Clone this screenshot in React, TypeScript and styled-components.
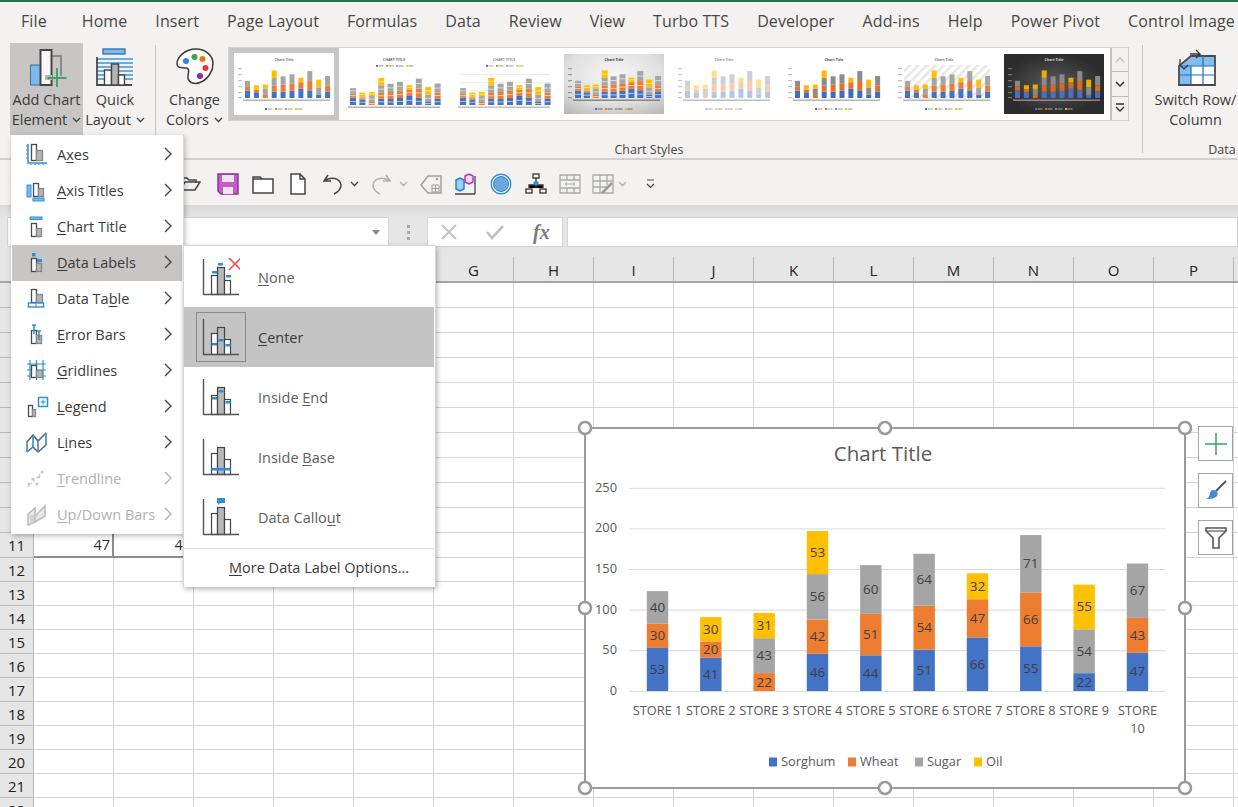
import React from "react";
import styled, { createGlobalStyle } from "styled-components";

const FONT = `"Open Sans", "Noto Sans", sans-serif`;
const BLUE = "#2b8fd8";
const DARK = "#4a4a4a";
const SERIES = ["#4472C4", "#ED7D31", "#A5A5A5", "#FFC000"];

const Global = createGlobalStyle`
  html, body { margin: 0; padding: 0; background: #fff; }
  * { box-sizing: border-box; }
`;

const Page = styled.div`
  position: relative;
  width: 1238px;
  height: 807px;
  overflow: hidden;
  background: #fff;
  font-family: ${FONT};
  color: #3b3a39;
`;
const TopStrip = styled.div`height: 2px; background: #217346;`;
const TabRow = styled.div`
  display: flex;
  align-items: center;
  height: 38px;
  padding-left: 7px;
  background: #f3f2f1;
  white-space: nowrap;
`;
const Tab = styled.span`
  padding: 0 14px;
  font-size: 16px;
  letter-spacing: 0.1px;
  color: #484644;
  &:first-child { margin-right: 7px; }
`;
const Ribbon = styled.div`
  display: flex;
  height: 120px;
  padding: 3px 0 0 10px;
  background: #f3f2f1;
  border-bottom: 2px solid #d2d0ce;
  overflow: hidden;
`;
const BigButton = styled.div<{ $w: number; $active?: boolean; $ml?: number }>`
  display: flex;
  flex-direction: column;
  align-items: center;
  flex: none;
  width: ${(p) => p.$w}px;
  height: 92px;
  margin-left: ${(p) => p.$ml ?? 0}px;
  padding-top: 4px;
  background: ${(p) => (p.$active ? "#c8c6c4" : "transparent")};
`;
const BigLabel = styled.div`
  margin-top: 3px;
  font-size: 14.5px;
  line-height: 20px;
  text-align: center;
  white-space: nowrap;
  color: #3b3a39;
`;
const Sep = styled.div<{ $h: number; $ml?: number }>`
  flex: none;
  width: 1px;
  height: ${(p) => p.$h}px;
  margin-top: 2px;
  margin-left: ${(p) => p.$ml ?? 0}px;
  background: #c8c6c4;
`;
const GroupColumn = styled.div<{ $w: number }>`
  display: flex;
  flex-direction: column;
  flex: none;
  width: ${(p) => p.$w}px;
`;
const GroupRow = styled.div`
  display: flex;
  height: 92px;
`;
const GroupLabel = styled.div`
  margin-top: 6px;
  font-size: 12.5px;
  line-height: 18px;
  text-align: center;
  color: #484644;
`;
const Gallery = styled.div`
  display: flex;
  flex: none;
  width: 883px;
  height: 74px;
  margin-top: 4px;
  background: #fff;
  border: 1px solid #d2d0ce;
`;
const Thumb = styled.div<{ $selected?: boolean }>`
  flex: none;
  width: 110px;
  height: 72px;
  border: ${(p) => (p.$selected ? "5px solid #c6c6c6" : "none")};
  padding: ${(p) => (p.$selected ? "1px 0" : "6px 5px")};
`;
const ThumbSvg = styled.svg`display: block;`;
const Scroller = styled.div`
  display: flex;
  flex-direction: column;
  flex: none;
  width: 18px;
  height: 74px;
  margin-top: 4px;
  border: 1px solid #d2d0ce;
  border-left: none;
`;
const ScrollButton = styled.div`
  display: flex;
  flex: 1;
  align-items: center;
  justify-content: center;
  background: #f3f2f1;
  border-bottom: 1px solid #bdbbb9;
  border-left: 1px solid #bdbbb9;
  &:last-child { border-bottom: none; }
`;
const Qat = styled.div`
  display: flex;
  align-items: center;
  height: 45px;
  padding: 2px 0 0 179px;
  background: #f3f2f1;
`;
const QatSlot = styled.div<{ $ml: number }>`
  display: flex;
  flex: none;
  align-items: center;
  justify-content: center;
  margin-left: ${(p) => p.$ml}px;
`;
const Shade = styled.div`
  height: 12px;
  background: linear-gradient(#d9d8d7, #e6e6e6);
`;
const FormulaBar = styled.div`
  display: flex;
  align-items: stretch;
  height: 30px;
  padding-left: 7px;
  background: #e6e6e6;
`;
const NameBox = styled.div`
  display: flex;
  flex: none;
  align-items: center;
  justify-content: flex-end;
  width: 382px;
  padding-right: 8px;
  background: #fff;
  border: 1px solid #d4d4d4;
`;
const Grip = styled.div`
  display: flex;
  flex: none;
  flex-direction: column;
  align-items: center;
  justify-content: center;
  gap: 3px;
  width: 38px;
`;
const GripDot = styled.span`
  width: 3px;
  height: 3px;
  background: #a8a8a8;
`;
const FxBox = styled.div`
  display: flex;
  flex: none;
  align-items: center;
  gap: 29px;
  width: 136px;
  padding-left: 13px;
  background: #fff;
  border: 1px solid #d4d4d4;
`;
const FxText = styled.span`
  font-family: "Liberation Serif", serif;
  font-size: 20px;
  font-style: italic;
  font-weight: 700;
  color: #7a7a7a;
`;
const FormulaInput = styled.div`
  flex: 1;
  margin-left: 4px;
  background: #fff;
  border: 1px solid #d4d4d4;
`;
const HeaderGap = styled.div`height: 10px; background: #e6e6e6;`;
const HeaderRow = styled.div`
  display: flex;
  height: 26px;
  background: #e6e6e6;
  border-bottom: 2px solid #a6a6a6;
`;
const Corner = styled.div`flex: none; width: 34px; border-right: 1px solid #b8b8b8;`;
const ColHead = styled.div`
  display: flex;
  flex: none;
  align-items: center;
  justify-content: center;
  width: 80px;
  padding-top: 2px;
  font-size: 15px;
  color: #222;
  border-right: 1px solid #b8b8b8;
`;
const Row = styled.div<{ $h: number }>`
  display: flex;
  height: ${(p) => p.$h}px;
`;
const RowHead = styled.div`
  display: flex;
  flex: none;
  align-items: center;
  justify-content: center;
  width: 34px;
  font-size: 15px;
  color: #222;
  background: #e6e6e6;
  border-right: 1px solid #b8b8b8;
  border-bottom: 1px solid #b8b8b8;
`;
const Cell = styled.div<{ $selBottom?: boolean; $selRight?: boolean }>`
  flex: none;
  width: 80px;
  padding-right: 2px;
  font-size: 14.5px;
  line-height: 23px;
  text-align: right;
  color: #333;
  border-right: ${(p) => (p.$selRight ? "2px solid #8c8c8c" : "1px solid #d4d4d4")};
  border-bottom: ${(p) => (p.$selBottom ? "2px solid #8c8c8c" : "1px solid #d4d4d4")};
`;

const Menu = styled.div`
  position: absolute;
  left: 11px;
  top: 135px;
  width: 173px;
  padding: 2px 1px 1px;
  background: #fff;
  border-right: 1px solid #d6d6d6;
  box-shadow: 1px 2px 5px rgba(0, 0, 0, 0.28);
`;
const MenuItem = styled.div<{ $active?: boolean; $disabled?: boolean }>`
  display: flex;
  align-items: center;
  height: 36px;
  padding: 0 0 2px 13px;
  font-size: 14.5px;
  background: ${(p) => (p.$active ? "#c8c6c4" : "transparent")};
  color: ${(p) => (p.$disabled ? "#b3b0ad" : "#3b3a39")};
  u { text-underline-offset: 2px; }
`;
const MenuIconSvg = styled.svg`flex: none;`;
const MenuLabel = styled.span`
  flex: 1;
  margin-left: 8px;
  white-space: nowrap;
`;
const Chevron = styled.span`
  display: flex;
  margin: 0 9px 1px 0;
`;
const SubMenu = styled.div`
  position: absolute;
  left: 183px;
  top: 245px;
  width: 253px;
  height: 342px;
  padding-top: 1px;
  background: #fff;
  box-shadow: 1px 2px 5px rgba(0, 0, 0, 0.3);
  border: 1px solid #d6d6d6;
  border-bottom: none;
`;
const SubItem = styled.div<{ $active?: boolean }>`
  display: flex;
  align-items: center;
  height: 60px;
  padding-left: 12px;
  margin-right: 1px;
  font-size: 14.5px;
  color: ${(p) => (p.$active ? "#3b3a39" : "#605e5c")};
  background: ${(p) => (p.$active ? "#c4c4c4" : "transparent")};
  u { text-underline-offset: 2px; }
`;
const SubIconFrame = styled.div<{ $active?: boolean }>`
  display: flex;
  flex: none;
  align-items: center;
  justify-content: center;
  width: 50px;
  height: 50px;
  border: 1px solid ${(p) => (p.$active ? "#8a8a8a" : "transparent")};
`;
const SubLabel = styled.span`margin-left: 12px;`;
const SubDivider = styled.div`
  height: 1px;
  margin: 1px 1px 0 0;
  background: #dcdcdc;
`;
const SubMore = styled.div`
  padding-left: 45px;
  font-size: 14.5px;
  line-height: 38px;
  color: #3b3a39;
  u { text-underline-offset: 2px; }
`;
const ChartBox = styled.div`
  position: absolute;
  left: 585px;
  top: 428px;
  width: 600px;
  height: 360px;
  svg { display: block; overflow: visible; }
`;
const SideButton = styled.div<{ $top: number }>`
  position: absolute;
  left: 1198px;
  top: ${(p) => p.$top}px;
  display: flex;
  align-items: center;
  justify-content: center;
  width: 35px;
  height: 35px;
  background: #fff;
  border: 1px solid #a6a6a6;
`;
const SmallSvg = styled.svg`
  margin-left: 5px;
  vertical-align: 2px;
`;

const DATA: number[][] = [
  [53, 30, 40, 0], [41, 20, 0, 30], [0, 22, 43, 31], [46, 42, 56, 53], [44, 51, 60, 0],
  [51, 54, 64, 0], [66, 47, 0, 32], [55, 66, 71, 0], [22, 0, 54, 55], [47, 43, 67, 0],
];

const Small = () => (
  <SmallSvg width="9" height="6" viewBox="0 0 9 6">
    <path d="M1 1l3.5 3.5L8 1" fill="none" stroke="#444" strokeWidth="1.3" />
  </SmallSvg>
);

const AddIcon = () => (
  <svg width="40" height="40" viewBox="0 0 40 40">
    <rect x="3.500" y="18" width="10" height="20" fill="#7db9ea" stroke="#3f6f9a" strokeWidth="1" />
    <rect x="13.500" y="3" width="11" height="35" fill="#f8f8f8" stroke="#444" strokeWidth="2" />
    <path d="M25 9h9v20" fill="none" stroke="#777" strokeWidth="1.5" />
    <rect x="18" y="28" width="7" height="5" fill="#b5b5b5" />
    <path d="M30 21v19M20.500 31h19" stroke="#36a55a" strokeWidth="1.8" />
  </svg>
);
const QuickIcon = () => (
  <svg width="40" height="40" viewBox="0 0 40 40">
    <rect x="8" y="2" width="22" height="5" fill="#7db9ea" stroke="#2d6ea8" strokeWidth="1.3" />
    <path d="M2 12h36M2 16h36M2 20h36M2 24h36M2 28h36M2 32h36" stroke="#3b97dc" strokeWidth="1.4" />
    <path d="M2 10v28h35" fill="none" stroke="#4a4a4a" strokeWidth="1.8" />
    <rect x="9.5" y="23" width="7" height="15" fill="#fff" stroke="#444" strokeWidth="1.4" />
    <rect x="16.5" y="17" width="7" height="21" fill="#b4b4b4" stroke="#444" strokeWidth="1.4" />
    <rect x="23.5" y="28" width="6" height="10" fill="#fff" stroke="#444" strokeWidth="1.4" />
  </svg>
);
const PaletteIcon = () => (
  <svg width="40" height="40" viewBox="0 0 40 40">
    <path d="M21 2C10 2 2 10 2 17c0 5 6 3 10 4 4 2 0 6 1 10 1 5 7 7 13 4 7-3 12-11 12-18C38 8 30 2 21 2Z" fill="#fff" stroke="#3b3a39" strokeWidth="1.5" />
    <circle cx="11" cy="14" r="3" fill="#2b88d8" />
    <circle cx="19.500" cy="10" r="3" fill="#3fa34d" />
    <circle cx="27.500" cy="12" r="3" fill="#e8750a" />
    <circle cx="30.500" cy="21" r="3" fill="#e53935" />
    <circle cx="25" cy="29" r="3" fill="#8e2aa8" />
  </svg>
);
const SwitchIcon = () => (
  <svg width="40" height="40" viewBox="0 0 40 40">
    <path d="M15 9h24v10H15zM3 21 15 9v10H27v0H3z" fill="#84bcef" />
    <path d="M3 19h12v19H3z" fill="#84bcef" />
    <path d="M15 19h24v19H15z" fill="#fff" />
    <path d="M3 19 15 9h24v29H3z" fill="none" stroke="#4a4a4a" strokeWidth="1.8" />
    <path d="M15 19v19M27 9v29M3 19h36M3 28h36" stroke="#1f6fb8" strokeWidth="1.2" />
    <path d="M14 7h10l-4-4M24 7l-4 4M4 12v6l4 4 4-4" fill="none" stroke="#3b3a39" strokeWidth="1.3" />
  </svg>
);

const bar = (x: number, y: number, w: number, b: number, gray?: boolean, c = DARK) => (
  <rect x={x} y={y} width={w} height={b - y} fill={gray ? "#b5b5b5" : "#fff"} stroke={c} strokeWidth="1.3" />
);
const MenuIcon = ({ name, dim }: { name: string; dim?: boolean }) => {
  const c = dim ? "#c4c4c4" : DARK;
  const body: Record<string, React.ReactNode> = {
    Axes: (
      <>
        {bar(6.500, 2.500, 5, 18.500, false, c)}{bar(11.500, 8.500, 6, 18.500, true, "#888")}
        <path d="M3 2v19h19" fill="none" stroke={BLUE} strokeWidth="1.500" />
        <path d="M1 4h2M1 8h2M1 12h2M1 16h2M6 22v1M10 22v1M14 22v1M18 22v1" stroke={BLUE} strokeWidth="1.200" />
      </>
    ),
    "Axis Titles": (
      <>
        <rect x="2" y="7" width="4" height="12" fill="#7db9ea" stroke={BLUE} />
        {bar(8.500, 5.500, 5, 18.500)}{bar(13.500, 10.500, 5, 18.500, true, "#888")}
        <rect x="8" y="20" width="11" height="3" fill="#7db9ea" stroke={BLUE} />
      </>
    ),
    "Chart Title": (
      <>
        <rect x="5" y="3" width="12" height="2.500" fill="#7db9ea" stroke={BLUE} />
        {bar(6.500, 9.500, 5, 22.500)}{bar(11.500, 14.500, 5, 22.500, true, "#888")}
      </>
    ),
    "Data Labels": (
      <>
        <rect x="7" y="3" width="3.500" height="3.500" fill={BLUE} />
        {bar(6.500, 8.500, 5, 21.500)}{bar(11.500, 13.500, 5, 21.500, true, "#888")}
        <rect x="12" y="9" width="5" height="3" fill={BLUE} />
      </>
    ),
    "Data Table": (
      <>
        {bar(6.500, 3.500, 5, 16.500)}{bar(11.500, 8.500, 6, 16.500, true, "#888")}
        <rect x="3.500" y="17" width="15" height="4" fill="#fff" stroke={BLUE} strokeWidth="1.400" />
        <path d="M11 17v4" stroke={BLUE} />
      </>
    ),
    "Error Bars": (
      <>
        {bar(6.500, 8.500, 5, 21.500)}{bar(11.500, 13.500, 5, 21.500, true, "#888")}
        <path d="M9 3v9M7 3h4M14 9v9M12 9h4" stroke={BLUE} strokeWidth="1.500" />
      </>
    ),
    Gridlines: (
      <>
        <path d="M2 6h19M2 12h19M2 18h19M5 2v20M11.500 2v20M18 2v20" stroke={BLUE} strokeWidth="1.200" />
        {bar(6.500, 7.500, 5, 19.500)}{bar(11.500, 12.500, 6, 19.500, true, "#888")}
      </>
    ),
    Legend: (
      <>
        {bar(3.500, 11.500, 4, 22.500)}{bar(7.500, 15.500, 3, 22.500, true, "#888")}
        <rect x="13.500" y="3.500" width="9" height="9" fill="#fff" stroke={BLUE} strokeWidth="1.500" />
        <path d="M15.500 8h5M18 5.500v5" stroke={BLUE} />
      </>
    ),
    Lines: (
      <>
        <path d="M2 12 8 5l5 6 8-8M2 22l6-5 5 5 8-7" fill="none" stroke="#666" strokeWidth="1.600" />
        <path d="M2 12v10M8 5v12M13 11v11M21 3v12" stroke={BLUE} strokeWidth="1.600" />
      </>
    ),
    Trendline: (
      <>
        <circle cx="4" cy="18" r="1.500" fill="#c4c4c4" /><circle cx="8" cy="13" r="1.500" fill="#c4c4c4" />
        <circle cx="12" cy="18" r="1.500" fill="#c4c4c4" /><circle cx="14" cy="11" r="1.500" fill="#c4c4c4" />
        <circle cx="17" cy="6" r="1.500" fill="#c4c4c4" />
        <path d="M3 21 20 3" stroke="#cfcfcf" strokeWidth="1.300" strokeDasharray="2 2" />
      </>
    ),
    "Up/Down Bars": (
      <>
        <path d="M3 12l7-6v14l-7 3zM10 14l10-10v10l-10 6" fill="#e8e8e8" stroke="#bdbdbd" strokeWidth="1.600" />
        <rect x="5" y="13" width="4" height="7" fill="#d2d2d2" />
      </>
    ),
  };
  return <MenuIconSvg width="24" height="24" viewBox="0 0 24 24">{body[name]}</MenuIconSvg>;
};
const DataIcon = ({ kind }: { kind: string }) => {
  const tops: Record<string, number[]> = {
    None: [17, 9, 22],
    Center: [15, 9, 21],
    "Inside End": [17, 9, 21],
    "Inside Base": [15, 9, 21],
    "Data Callout": [15, 9, 21],
  };
  const t = tops[kind];
  const b = [
    { x: 9, w: 6 },
    { x: 15, w: 7 },
    { x: 22, w: 6 },
  ];
  const dash = (x: number, y: number, w = 5) => <rect key={`${x}-${y}`} x={x} y={y} width={w} height="2.500" fill={BLUE} />;
  return (
    <svg width="38" height="38" viewBox="0 0 38 38">
      {b.map((r, i) => (
        <rect key={i} x={r.x + 0.5} y={t[i] + 0.5} width={r.w} height={36 - t[i]} fill={i === 1 ? "#b7b7b7" : "#fff"} stroke="#444" strokeWidth="1.200" />
      ))}
      <path d="M1.500 1v35.500H37" fill="none" stroke="#555" strokeWidth="1.400" />
      {kind === "None" && (
        <>
          {dash(10, 13)}{dash(16, 5)}{dash(24, 17)}
          <path d="M27 0l12 12M39 0 27 12" stroke="#ee4444" strokeWidth="1.500" />
        </>
      )}
      {kind === "Center" && <>{dash(10, 25)}{dash(16.500, 21)}{dash(23.500, 26)}</>}
      {kind === "Inside End" && <>{dash(10, 19)}{dash(16.500, 12)}{dash(23.500, 23)}</>}
      {kind === "Inside Base" && dash(9.500, 30, 19)}
      {kind === "Data Callout" && <path d="M15 0h8v5h-5l-2 2V5h-1z" fill={BLUE} />}
    </svg>
  );
};

const q = { stroke: "#444", fill: "none", strokeWidth: 1.500 };
const QatIcons: Record<string, React.ReactNode> = {
  open: (
    <svg width="22" height="20" viewBox="0 0 22 20">
      <path d="M1 4h7l2 2h7v3" {...q} /><path d="M1 4v12h15l5-8H6L1 16" {...q} />
    </svg>
  ),
  save: (
    <svg width="22" height="22" viewBox="0 0 22 22">
      <path d="M1 1h20v20H4l-3-3z" fill="#c65cc6" stroke="#8c2f96" strokeWidth="1.400" />
      <rect x="5" y="2" width="12" height="7" fill="#f3e4f3" />
      <rect x="6" y="14" width="10" height="7" fill="#f3e4f3" />
    </svg>
  ),
  folder: (
    <svg width="22" height="20" viewBox="0 0 22 20">
      <path d="M1 3h7l2 2h11v14H1z" fill="#fff" stroke="#444" strokeWidth="1.500" /><path d="M1 5h9" {...q} />
    </svg>
  ),
  page: (
    <svg width="18" height="22" viewBox="0 0 18 22">
      <path d="M2 1h9l5 5v15H2zM11 1v5h5" fill="#fff" stroke="#444" strokeWidth="1.500" />
    </svg>
  ),
  undo: (
    <svg width="22" height="22" viewBox="0 0 22 22">
      <path d="M6 2 2 8h7M2 8c7-5 16-3 17 4 0 4-3 7-7 9" {...q} />
    </svg>
  ),
  redo: (
    <svg width="22" height="22" viewBox="0 0 22 22">
      <path d="M16 2l4 6h-7M20 8C13 3 4 5 3 12c0 4 3 7 7 9" fill="none" stroke="#b0b0b0" strokeWidth="1.500" />
    </svg>
  ),
  tag: (
    <svg width="22" height="22" viewBox="0 0 22 22">
      <path d="M8 3h13v17H8L1 12z" fill="none" stroke="#a0a0a0" strokeWidth="1.500" />
      <path d="M12 12h7v7h-7zM15.500 12v7M12 15.500h7" fill="none" stroke="#a0a0a0" />
      <circle cx="17" cy="6" r="1.300" fill="#a0a0a0" />
    </svg>
  ),
  cubes: (
    <svg width="22" height="22" viewBox="0 0 22 22">
      <path d="M1 21h20M21 3v18" stroke="#444" strokeWidth="1.300" />
      <path d="M2 7l4-2 4 2v9l-4 2-4-2z" fill="#9fd0f5" stroke="#1f7fd0" strokeWidth="1.400" />
      <path d="M11 3l4-2 4 2v6l-4 2-4-2z" fill="#f3d9f3" stroke="#b032b0" strokeWidth="1.400" />
    </svg>
  ),
  circle: (
    <svg width="22" height="22" viewBox="0 0 22 22">
      <circle cx="11" cy="11" r="9.800" fill="#fff" stroke="#2b8fd8" strokeWidth="1.400" />
      <circle cx="11" cy="11" r="7.500" fill="#6ea6e0" stroke="#2b7fd0" />
    </svg>
  ),
  org: (
    <svg width="22" height="22" viewBox="0 0 22 22">
      <rect x="8" y="1" width="6" height="4" fill="none" stroke="#333" strokeWidth="1.300" />
      <path d="M11 5v3M4 15v-3h14v3M11 12v3" stroke="#333" strokeWidth="1.300" />
      <path d="M11 7l3 3-3 3-3-3z" fill="#2b8fd8" />
      <rect x="1" y="16" width="6" height="4" fill="none" stroke="#333" strokeWidth="1.300" />
      <rect x="15" y="16" width="6" height="4" fill="none" stroke="#333" strokeWidth="1.300" />
    </svg>
  ),
  table: (
    <svg width="22" height="22" viewBox="0 0 22 22">
      <path d="M1 2h20v18H1zM1 7h20M1 15h20M8 2v5M15 2v5M8 15v5M15 15v5" fill="none" stroke="#aaa" strokeWidth="1.300" />
      <path d="M6 11h10M6 11l2-2M6 11l2 2M16 11l-2-2M16 11l-2 2" stroke="#aaa" />
    </svg>
  ),
  table2: (
    <svg width="22" height="22" viewBox="0 0 22 22">
      <path d="M1 2h20v18H1zM1 8h20M1 14h14M8 2v18M15 2v10" fill="none" stroke="#aaa" strokeWidth="1.300" />
      <path d="M10 20l10-10" stroke="#999" strokeWidth="2.500" />
    </svg>
  ),
  chev: (
    <svg width="9" height="6" viewBox="0 0 9 6"><path d="M1 1l3.500 3.500L8 1" fill="none" stroke="#444" strokeWidth="1.300" /></svg>
  ),
  chevDim: (
    <svg width="9" height="6" viewBox="0 0 9 6"><path d="M1 1l3.500 3.500L8 1" fill="none" stroke="#b0b0b0" strokeWidth="1.300" /></svg>
  ),
  custom: (
    <svg width="11" height="10" viewBox="0 0 11 10"><path d="M2 1h7M2 5l3.500 3.500L9 5" fill="none" stroke="#444" strokeWidth="1.200" /></svg>
  ),
};
const QAT_ITEMS: [string, number][] = [
  ["open", 0], ["save", 16], ["folder", 13], ["page", 15], ["undo", 15], ["chev", 6], ["redo", 11], ["chevDim", 7],
  ["tag", 12], ["cubes", 12], ["circle", 14], ["org", 13], ["table", 12], ["table2", 11], ["chevDim", 4], ["custom", 18],
];

type Style = { bg: string; colors: string[]; title: string; titleColor: string; top?: boolean; grid?: boolean; hatch?: boolean; seg?: boolean; label: string };
const THUMBS: Style[] = [
  { bg: "#fff", colors: SERIES, title: "Chart Title", titleColor: "#777", label: "#999" },
  { bg: "#fff", colors: SERIES, title: "CHART TITLE", titleColor: "#666", top: true, seg: true, label: "#999" },
  { bg: "#fff", colors: SERIES, title: "CHART TITLE", titleColor: "#888", top: true, seg: true, grid: true, label: "#aaa" },
  { bg: "url(#grayBg)", colors: SERIES, title: "Chart Title", titleColor: "#333", seg: true, label: "#666" },
  { bg: "#fff", colors: ["#b4c7e7", "#f8cbad", "#d0d0d0", "#ffe08a"], title: "Chart Title", titleColor: "#999", label: "#aaa" },
  { bg: "#fff", colors: ["#3d6cc0", "#e8702a", "#8c8c8c", "#ffb900"], title: "Chart Title", titleColor: "#35507a", label: "#999" },
  { bg: "url(#hatchBg)", colors: SERIES, title: "Chart Title", titleColor: "#777", hatch: true, label: "#999" },
  { bg: "url(#darkBg)", colors: ["#4472C4", "#d9691f", "#8a8a8a", "#e8af00"], title: "Chart Title", titleColor: "#ddd", label: "#aaa" },
];
const MiniChart = ({ s, i }: { s: Style; i: number }) => {
  const base = s.top ? 51 : 44;
  const k = s.top ? 0.137 : 0.14;
  const x0 = s.top ? 6 : 11;
  const pitch = s.top ? 9.4 : 8.9;
  const w = s.top || s.seg ? 6 : 5;
  return (
    <ThumbSvg width="100" height="60" viewBox="0 0 100 60">
      <defs>
        <radialGradient id="grayBg" cx="0.5" cy="0.35" r="0.8"><stop offset="0" stopColor="#f6f6f6" /><stop offset="0.6" stopColor="#e0e0e0" /><stop offset="1" stopColor="#b8b8b8" /></radialGradient>
        <radialGradient id="darkBg"><stop offset="0" stopColor="#5a5a5a" /><stop offset="1" stopColor="#2c2c2c" /></radialGradient>
        <pattern id="hatchBg" width="6" height="6" patternUnits="userSpaceOnUse" patternTransform="rotate(45)">
          <rect width="6" height="6" fill="#fff" /><rect width="2.500" height="6" fill="#e6e6e6" />
        </pattern>
      </defs>
      <rect width="100" height="60" fill={s.hatch ? "#fff" : s.bg} />
      {s.hatch && <rect x="10" y="11" width="86" height="34" fill="url(#hatchBg)" />}
      <text x="50" y="6.500" fontSize="3.600" fontWeight="700" textAnchor="middle" fill={s.titleColor} fontFamily={FONT}>{s.title}</text>
      {s.top && [32, 42, 52, 62].map((x, n) => (
        <g key={x}>
          <rect x={x} y="11" width="2" height="1.800" fill={s.colors[n]} />
          <rect x={x + 2.500} y="11" width="5" height="1.800" fill={s.label} opacity="0.6" />
        </g>
      ))}
      {s.grid && [20, 28, 36, 44].map((y) => <rect key={y} x="6" y={y} width="90" height="0.500" fill="#ddd" />)}
      {!s.top && [14, 20, 26, 32, 38, 43].map((y) => <rect key={y} x="4" y={y} width="4" height="1.200" fill={s.label} opacity="0.6" />)}
      {DATA.map((d, c) => {
        let y = base;
        return d.map((v, j) => {
          if (!v) return null;
          const h = v * k;
          y -= h;
          return (
            <g key={`${i}-${c}-${j}`}>
              <rect x={x0 + c * pitch} y={y} width={w} height={h} fill={s.colors[j]} />
              {s.seg && <rect x={x0 + c * pitch} y={y + h / 2 - 0.4} width={w} height="0.800" fill="#fff" opacity="0.7" />}
            </g>
          );
        });
      })}
      <rect x={x0 - 2} y={base + 1.500} width={100 - x0 - 2} height="1.400" fill={s.label} opacity="0.8" />
      {!s.top && [31, 41, 51, 61].map((x, n) => (
        <g key={x}>
          <rect x={x} y="54" width="2" height="2" fill={s.colors[n]} />
          <rect x={x + 2.500} y="54.300" width="5" height="1.400" fill={s.label} opacity="0.7" />
        </g>
      ))}
    </ThumbSvg>
  );
};

const CATS = ["STORE 1", "STORE 2", "STORE 3", "STORE 4", "STORE 5", "STORE 6", "STORE 7", "STORE 8", "STORE 9"];
const AX = { fontFamily: FONT, fontSize: 12.8, fill: "#595959" };
const Chart = () => {
  const zero = 691;
  const k = 0.812;
  return (
    <svg width="600" height="360" viewBox="585 428 600 360">
      <rect x="585" y="428" width="600" height="360" fill="#fff" stroke="#9a9a9a" strokeWidth="2" />
      <text x="883" y="461" textAnchor="middle" fontFamily={FONT} fontSize="20.500" fill="#595959">Chart Title</text>
      {[0, 50, 100, 150, 200, 250].map((v) => {
        const y = zero - v * k + 0.3;
        return (
          <g key={v}>
            <line x1="629" x2="1165" y1={y} y2={y} stroke="#d9d9d9" strokeWidth="1" />
            <text x="617" y={y + 3.500} textAnchor="end" {...AX}>{v}</text>
          </g>
        );
      })}
      {DATA.map((d, c) => {
        let y = zero;
        const cx = 657.500 + c * 53.330;
        return (
          <g key={c}>
            {d.map((v, j) => {
              if (!v) return null;
              const h = v * k;
              y -= h;
              return (
                <g key={j}>
                  <rect x={cx - 10.700} y={y} width="21.400" height={h} fill={SERIES[j]} />
                  <text x={cx} y={y + h / 2 + 4.500} textAnchor="middle" fontFamily={FONT} fontSize="13.500" fill="#404040">{v}</text>
                </g>
              );
            })}
          </g>
        );
      })}
      {CATS.map((t, c) => <text key={t} x={657.500 + c * 53.330} y="715" textAnchor="middle" {...AX}>{t}</text>)}
      <text x="1137.500" y="715" textAnchor="middle" {...AX}>STORE</text>
      <text x="1137.500" y="733" textAnchor="middle" {...AX}>10</text>
      {[["Sorghum", 769], ["Wheat", 848], ["Sugar", 915], ["Oil", 974]].map(([t, x], i) => (
        <g key={t as string}>
          <rect x={x as number} y="757.500" width="8" height="9" fill={SERIES[i]} />
          <text x={(x as number) + 12} y="766" {...AX}>{t as string}</text>
        </g>
      ))}
      {[[585, 428], [885, 428], [1185, 428], [585, 608], [1185, 608], [585, 788], [885, 788], [1185, 788]].map(([x, y]) => (
        <circle key={`${x}-${y}`} cx={x} cy={y} r="6" fill="#fff" stroke="#999" strokeWidth="2.500" />
      ))}
    </svg>
  );
};

const Lbl = ({ t }: { t: [string, string, string] }) => (
  <>{t[0]}<u>{t[1]}</u>{t[2]}</>
);
const MENU: { id: string; t: [string, string, string]; active?: boolean; dim?: boolean }[] = [
  { id: "Axes", t: ["A", "x", "es"] },
  { id: "Axis Titles", t: ["", "A", "xis Titles"] },
  { id: "Chart Title", t: ["", "C", "hart Title"] },
  { id: "Data Labels", t: ["", "D", "ata Labels"], active: true },
  { id: "Data Table", t: ["Data Ta", "b", "le"] },
  { id: "Error Bars", t: ["", "E", "rror Bars"] },
  { id: "Gridlines", t: ["", "G", "ridlines"] },
  { id: "Legend", t: ["", "L", "egend"] },
  { id: "Lines", t: ["L", "i", "nes"] },
  { id: "Trendline", t: ["", "T", "rendline"], dim: true },
  { id: "Up/Down Bars", t: ["", "U", "p/Down Bars"], dim: true },
];
const SUB: { id: string; t: [string, string, string]; active?: boolean }[] = [
  { id: "None", t: ["", "N", "one"] },
  { id: "Center", t: ["", "C", "enter"], active: true },
  { id: "Inside End", t: ["Inside ", "E", "nd"] },
  { id: "Inside Base", t: ["Inside ", "B", "ase"] },
  { id: "Data Callout", t: ["Data Callo", "u", "t"] },
];
const TABS = ["File", "Home", "Insert", "Page Layout", "Formulas", "Data", "Review", "View", "Turbo TTS", "Developer", "Add-ins", "Help", "Power Pivot", "Control Image"];
// the columns under the open menus and the one past the edge show no letter in the picture
const COLS = ["", "", "", "", "", "G", "H", "I", "J", "K", "L", "M", "N", "O", "P", ""];
const ROWS = Array.from({ length: 22 }, (_, i) => i + 1);

export default function App() {
  return (
    <Page>
      <Global />
      <TopStrip />
      <TabRow>{TABS.map((t) => <Tab key={t}>{t}</Tab>)}</TabRow>
      <Ribbon>
        <BigButton $w={73} $active>
          <AddIcon />
          <BigLabel>Add Chart<br />Element<Small /></BigLabel>
        </BigButton>
        <BigButton $w={64}>
          <QuickIcon />
          <BigLabel>Quick<br />Layout<Small /></BigLabel>
        </BigButton>
        <Sep $h={90} $ml={8} />
        <GroupColumn $w={986}>
          <GroupRow>
            <BigButton $w={67} $ml={5}>
              <PaletteIcon />
              <BigLabel>Change<br />Colors<Small /></BigLabel>
            </BigButton>
            <Gallery>
              {THUMBS.map((s, i) => (
                <Thumb key={i} $selected={i === 0}><MiniChart s={s} i={i} /></Thumb>
              ))}
            </Gallery>
            <Scroller>
              <ScrollButton>
                <svg width="10" height="6" viewBox="0 0 10 6"><path d="M1 5l4-4 4 4" fill="none" stroke="#bbb" strokeWidth="1.300" /></svg>
              </ScrollButton>
              <ScrollButton>
                <svg width="10" height="6" viewBox="0 0 10 6"><path d="M1 1l4 4 4-4" fill="none" stroke="#333" strokeWidth="1.500" /></svg>
              </ScrollButton>
              <ScrollButton>
                <svg width="10" height="10" viewBox="0 0 10 10"><path d="M1 1h8M1 4l4 4 4-4" fill="none" stroke="#333" strokeWidth="1.300" /></svg>
              </ScrollButton>
            </Scroller>
          </GroupRow>
          <GroupLabel>Chart Styles</GroupLabel>
        </GroupColumn>
        <Sep $h={108} />
        <GroupColumn $w={158}>
          <GroupRow>
            <BigButton $w={105}>
              <SwitchIcon />
              <BigLabel>Switch Row/<br />Column</BigLabel>
            </BigButton>
          </GroupRow>
          <GroupLabel>Data</GroupLabel>
        </GroupColumn>
      </Ribbon>
      <Qat>
        {QAT_ITEMS.map(([k, ml], i) => <QatSlot key={i} $ml={ml}>{QatIcons[k]}</QatSlot>)}
      </Qat>
      <Shade />
      <FormulaBar>
        <NameBox>
          <svg width="8" height="5" viewBox="0 0 8 5"><path d="M0 0h8L4 5z" fill="#888" /></svg>
        </NameBox>
        <Grip><GripDot /><GripDot /><GripDot /></Grip>
        <FxBox>
          <svg width="16" height="16" viewBox="0 0 16 16"><path d="M1 1l14 14M15 1 1 15" stroke="#c0c0c0" strokeWidth="1.800" /></svg>
          <svg width="18" height="16" viewBox="0 0 18 16"><path d="M1 8l5 6L17 2" fill="none" stroke="#c0c0c0" strokeWidth="2.600" /></svg>
          <FxText>fx</FxText>
        </FxBox>
        <FormulaInput />
      </FormulaBar>
      <HeaderGap />
      <HeaderRow>
        <Corner />
        {COLS.map((c, i) => <ColHead key={i}>{c}</ColHead>)}
      </HeaderRow>
      {ROWS.map((r) => (
        <Row key={r} $h={r <= 11 ? 25 : 24}>
          <RowHead>{r >= 11 ? r : ""}</RowHead>
          {COLS.map((_, i) => (
            <Cell key={i} $selBottom={r === 11 && i < 2} $selRight={r === 11 && i === 0}>
              {r === 11 && i === 0 ? "47" : r === 11 && i === 1 ? "43" : ""}
            </Cell>
          ))}
        </Row>
      ))}
      <Menu>
        {MENU.map((m) => (
          <MenuItem key={m.id} $active={m.active} $disabled={m.dim}>
            <MenuIcon name={m.id} dim={m.dim} />
            <MenuLabel><Lbl t={m.t} /></MenuLabel>
            <Chevron>
              <svg width="9" height="14" viewBox="0 0 9 14"><path d="M1 1l6 6-6 6" fill="none" stroke={m.dim ? "#b3b0ad" : "#444"} strokeWidth="1.400" /></svg>
            </Chevron>
          </MenuItem>
        ))}
      </Menu>
      <SubMenu>
        {SUB.map((s) => (
          <SubItem key={s.id} $active={s.active}>
            <SubIconFrame $active={s.active}><DataIcon kind={s.id} /></SubIconFrame>
            <SubLabel><Lbl t={s.t} /></SubLabel>
          </SubItem>
        ))}
        <SubDivider />
        <SubMore><Lbl t={["", "M", "ore Data Label Options..."]} /></SubMore>
      </SubMenu>
      <ChartBox><Chart /></ChartBox>
      <SideButton $top={426}>
        <svg width="22" height="22" viewBox="0 0 22 22"><path d="M11 0v22M0 11h22" stroke="#36a55a" strokeWidth="1.500" /></svg>
      </SideButton>
      <SideButton $top={473}>
        <svg width="24" height="24" viewBox="0 0 24 24">
          <path d="M22 2 12 12" stroke="#555" strokeWidth="2" />
          <path d="M9 11c4 0 6 3 4 6-3 3-7 3-11 3 3-1 3-3 4-5 0-2 1-4 3-4z" fill="#3b8fdc" />
        </svg>
      </SideButton>
      <SideButton $top={520}>
        <svg width="24" height="24" viewBox="0 0 24 24"><path d="M2 2h20v3l-7 7v10H9V12L2 5z" fill="#fff" stroke="#555" strokeWidth="1.600" /><path d="M2 5h20" stroke="#555" strokeWidth="1.200" /></svg>
      </SideButton>
    </Page>
  );
}
